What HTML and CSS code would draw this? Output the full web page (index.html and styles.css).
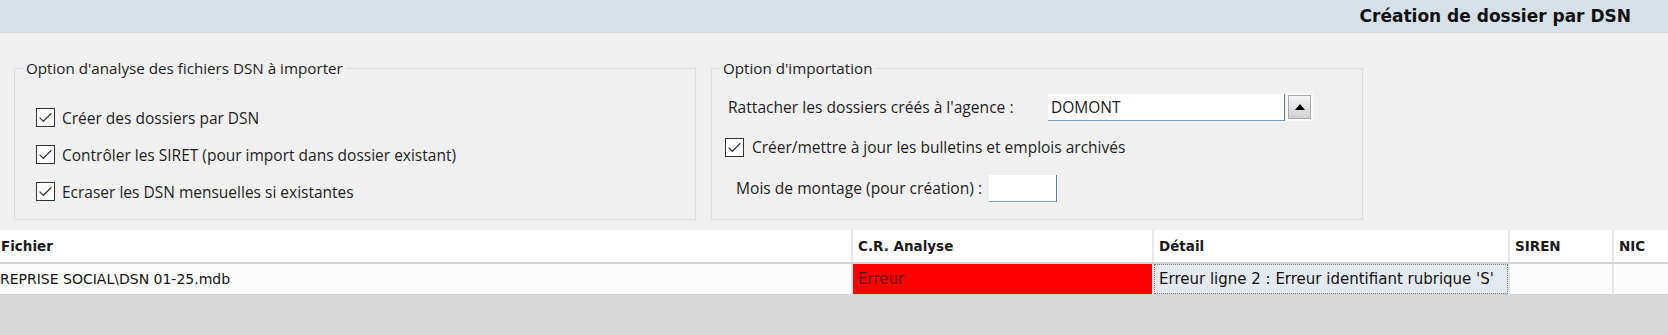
FILE: index.html
```html
<!DOCTYPE html>
<html lang="fr">
<head>
<meta charset="utf-8">
<title>Création de dossier par DSN</title>
<link rel="stylesheet" href="styles.css">
</head>
<body>
<div class="titlebar"><span class="title">Création de dossier par DSN</span></div>

<div class="options">
  <fieldset class="group group-analyse">
    <legend>Option d'analyse des fichiers DSN à importer</legend>
    <div class="check-row">
      <span class="cb"><svg width="19" height="19" viewBox="0 0 19 19"><rect x="0.5" y="0.5" width="18" height="18" fill="#fff" stroke="#333"/><path d="M3.6 9.6 L7.4 13.3 L15.4 5.3" fill="none" stroke="#3a3a3a" stroke-width="1.3"/></svg></span>
      <span class="cb-label">Créer des dossiers par DSN</span>
    </div>
    <div class="check-row">
      <span class="cb"><svg width="19" height="19" viewBox="0 0 19 19"><rect x="0.5" y="0.5" width="18" height="18" fill="#fff" stroke="#333"/><path d="M3.6 9.6 L7.4 13.3 L15.4 5.3" fill="none" stroke="#3a3a3a" stroke-width="1.3"/></svg></span>
      <span class="cb-label">Contrôler les SIRET (pour import dans dossier existant)</span>
    </div>
    <div class="check-row">
      <span class="cb"><svg width="19" height="19" viewBox="0 0 19 19"><rect x="0.5" y="0.5" width="18" height="18" fill="#fff" stroke="#333"/><path d="M3.6 9.6 L7.4 13.3 L15.4 5.3" fill="none" stroke="#3a3a3a" stroke-width="1.3"/></svg></span>
      <span class="cb-label">Ecraser les DSN mensuelles si existantes</span>
    </div>
  </fieldset>

  <fieldset class="group group-import">
    <legend>Option d'importation</legend>
    <div class="field-row row-agence">
      <span class="field-label label-agence">Rattacher les dossiers créés à l'agence :</span>
      <span class="input input-agence">DOMONT</span>
      <span class="spin"><span class="tri"></span></span>
    </div>
    <div class="check-row row-bulletins">
      <span class="cb"><svg width="19" height="19" viewBox="0 0 19 19"><rect x="0.5" y="0.5" width="18" height="18" fill="#fff" stroke="#333"/><path d="M3.6 9.6 L7.4 13.3 L15.4 5.3" fill="none" stroke="#3a3a3a" stroke-width="1.3"/></svg></span>
      <span class="cb-label">Créer/mettre à jour les bulletins et emplois archivés</span>
    </div>
    <div class="field-row row-mois">
      <span class="field-label label-mois">Mois de montage (pour création) :</span>
      <span class="input input-mois"></span>
    </div>
  </fieldset>
</div>

<div class="grid-wrap">
  <table class="grid">
    <colgroup>
      <col class="c-fichier">
      <col class="c-cr">
      <col class="c-detail">
      <col class="c-siren">
      <col class="c-nic">
    </colgroup>
    <thead>
      <tr>
        <th class="first">Fichier</th>
        <th>C.R. Analyse</th>
        <th>Détail</th>
        <th>SIREN</th>
        <th>NIC</th>
      </tr>
    </thead>
    <tbody>
      <tr>
        <td class="first file">REPRISE SOCIAL\DSN 01-25.mdb</td>
        <td class="err">Erreur</td>
        <td class="detail">Erreur ligne 2 : Erreur identifiant rubrique 'S'</td>
        <td></td>
        <td></td>
      </tr>
    </tbody>
  </table>
</div>
<div class="empty"></div>
</body>
</html>
```

FILE: styles.css
```css
html, body {
  margin: 0;
  padding: 0;
}
body {
  width: 1668px;
  height: 335px;
  overflow: hidden;
  background: #f0f0f0;
  font-family: "Open Sans", "Noto Sans", sans-serif;
  color: #1e1e1e;
  display: flex;
  flex-direction: column;
}

.titlebar {
  height: 33px;
  background: #d6e0e6;
  display: flex;
  align-items: center;
  justify-content: flex-end;
  padding-right: 37px;
  box-sizing: border-box;
}
.title {
  font-family: "DejaVu Sans", sans-serif;
  font-weight: bold;
  font-size: 17px;
  color: #111;
  margin-top: -1px;
}

.options {
  display: flex;
  align-items: stretch;
  gap: 15px;
  padding: 24px 0 10px 14px;
}
.group {
  margin: 0;
  border: 1px solid #dcdcdc;
  padding: 0 0 0 8px;
  box-sizing: border-box;
  min-width: 0;
}
.group legend {
  padding: 0 3px;
  font-size: 15.2px;
  line-height: 22px;
  color: #1e1e1e;
}
.group-analyse {
  width: 682px;
  padding-top: 20px;
  padding-bottom: 9px;
}
.group-import {
  width: 652px;
  padding-top: 14px;
  padding-bottom: 13px;
}

.check-row {
  display: flex;
  align-items: center;
  height: 37px;
  margin-left: 13px;
}
.cb {
  width: 19px;
  height: 19px;
  display: block;
  flex: none;
}
.cb svg { display: block; }
.cb-label {
  margin-left: 7px;
  font-size: 15.5px;
  white-space: nowrap;
}

.field-row {
  display: flex;
  align-items: center;
  height: 28px;
}
.field-label {
  font-size: 15.6px;
  white-space: nowrap;
  flex: none;
}
.row-agence { margin-left: 8px; }
.label-agence { width: 320px; }
.row-bulletins {
  margin-left: 5px;
  height: 28px;
  margin-top: 12px;
}
.row-bulletins .cb-label { margin-left: 8px; }
.row-mois {
  margin-left: 16px;
  margin-top: 13px;
}
.label-mois { width: 253px; }

.input {
  display: flex;
  align-items: center;
  box-sizing: border-box;
  height: 28px;
  background: #fff;
  border-right: 1px solid #5b7f9e;
  border-bottom: 1px solid #7aa0bf;
  font-size: 15.5px;
  padding-left: 3px;
  color: #1a1a1a;
}
.input-agence { width: 237px; height: 27px; }
.input-mois { width: 68px; height: 27px; }

.spin {
  width: 23px;
  height: 24px;
  margin-left: 3px;
  box-sizing: border-box;
  border: 1px solid #a9a9a9;
  background: linear-gradient(#f4f4f4, #d2d2d2);
  box-shadow: 0 0 0 2px #fafafa;
  display: flex;
  align-items: center;
  justify-content: center;
}
.tri {
  width: 0;
  height: 0;
  border-left: 5px solid transparent;
  border-right: 5px solid transparent;
  border-bottom: 6px solid #000;
}

.grid-wrap {
  background: #d8d8d8;
}
.grid {
  border-collapse: collapse;
  table-layout: fixed;
  width: 1668px;
  font-family: "DejaVu Sans", sans-serif;
}
.c-fichier { width: 852px; }
.c-cr { width: 301px; }
.c-detail { width: 356px; }
.c-siren { width: 104px; }
.c-nic { width: 55px; }

.grid th {
  height: 32px;
  background: #fff;
  text-align: left;
  font-weight: bold;
  font-size: 13.5px;
  color: #1a1a1a;
  padding: 0 0 0 5px;
  border-left: 2px solid #e8e8e8;
  border-bottom: 2px solid #d3d3d3;
  white-space: nowrap;
  overflow: hidden;
}
.grid td {
  height: 30px;
  background: #fcfcfc;
  font-size: 15px;
  color: #141414;
  padding: 0 0 0 5px;
  border-left: 2px solid #e6e6e6;
  border-bottom: 1px solid #cfcfcf;
  white-space: nowrap;
  overflow: hidden;
}
.grid .first {
  border-left: none;
  padding-left: 1px;
}
.grid td.file {
  padding-left: 0;
  font-size: 14px;
}
.grid td.err {
  background: #ff0000;
  color: #640000;
}
.grid td.detail {
  background: #e3e9ee;
  outline: 1px dotted #7a7a7a;
  outline-offset: -2px;
}

.empty {
  flex: 1;
  background: #d8d8d8;
}
```
